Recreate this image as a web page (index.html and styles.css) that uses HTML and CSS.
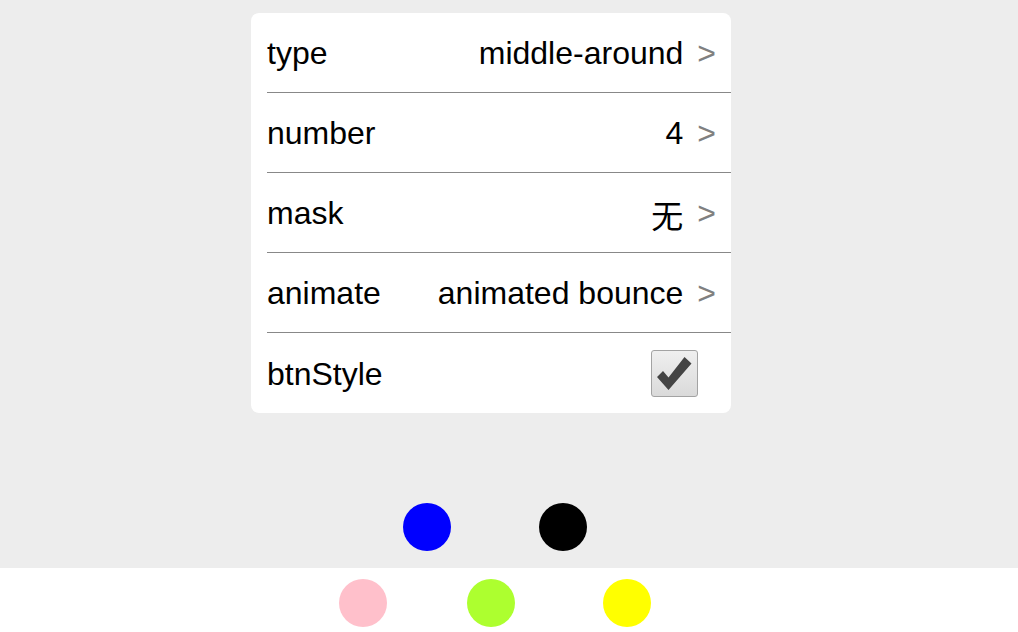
FILE: index.html
```html
<!DOCTYPE html>
<html>
<head>
<meta charset="utf-8">
<link rel="stylesheet" href="styles.css">
</head>
<body>
<div class="page">
  <div class="card">
    <div class="row">
      <span class="label">type</span>
      <span class="value">middle-around</span>
      <span class="arrow">&gt;</span>
    </div>
    <div class="row">
      <span class="label">number</span>
      <span class="value">4</span>
      <span class="arrow">&gt;</span>
    </div>
    <div class="row">
      <span class="label">mask</span>
      <span class="value">无</span>
      <span class="arrow">&gt;</span>
    </div>
    <div class="row">
      <span class="label">animate</span>
      <span class="value">animated bounce</span>
      <span class="arrow">&gt;</span>
    </div>
    <div class="row last">
      <span class="label">btnStyle</span>
      <span class="check">
        <svg width="47" height="47" viewBox="0 0 47 47">
          <polygon points="6,27 12,21 17.5,27.5 33.5,7 40.5,13.5 17.5,40" fill="#444"/>
        </svg>
      </span>
    </div>
  </div>
  <div class="spacer"></div>
  <div class="dots-top">
    <span class="dot blue"></span>
    <span class="dot black"></span>
  </div>
  <div class="footer">
    <span class="dot pink"></span>
    <span class="dot green"></span>
    <span class="dot yellow"></span>
  </div>
</div>
</body>
</html>
```

FILE: styles.css
```css
html, body {
  margin: 0;
  padding: 0;
}
body {
  background: #ededed;
  font-family: "Liberation Sans", "Noto Sans CJK SC", sans-serif;
  color: #000;
}
.page {
  height: 632px;
  display: flex;
  flex-direction: column;
}
.card {
  margin: 13px 0 0 251px;
  width: 480px;
  background: #fff;
  border-radius: 8px;
}
.row {
  margin-left: 16px;
  padding-right: 15px;
  padding-top: 2px;
  height: 79px;
  box-sizing: border-box;
  height: 80px;
  border-bottom: 1px solid #888;
  display: flex;
  align-items: center;
  font-size: 32px;
}
.row.last {
  border-bottom: none;
}
.label {
  flex: 1;
}
.value {
  white-space: nowrap;
}
.arrow {
  color: #808080;
  margin-left: 14px;
}
.check {
  width: 45px;
  height: 45px;
  margin-right: 18px;
  margin-top: -2px;
  border: 1px solid #a3a3a3;
  border-radius: 3px;
  background: linear-gradient(#efefef, #dadada);
  position: relative;
  display: block;
}
.check svg {
  position: absolute;
  left: -1px;
  top: -1px;
}
.spacer {
  flex: 1;
}
.dots-top {
  display: flex;
  padding-left: 403px;
  gap: 88px;
  margin-bottom: 17px;
}
.footer {
  height: 64px;
  background: #fff;
  display: flex;
  padding-left: 339px;
  padding-top: 11px;
  box-sizing: border-box;
}
.dot {
  width: 48px;
  height: 48px;
  border-radius: 50%;
  display: block;
}
.blue { background: #0000ff; }
.black { background: #000; }
.pink { background: #ffc0cb; }
.green { background: #adff2f; margin-left: 80px; }
.yellow { background: #ffff00; margin-left: 88px; }
```
